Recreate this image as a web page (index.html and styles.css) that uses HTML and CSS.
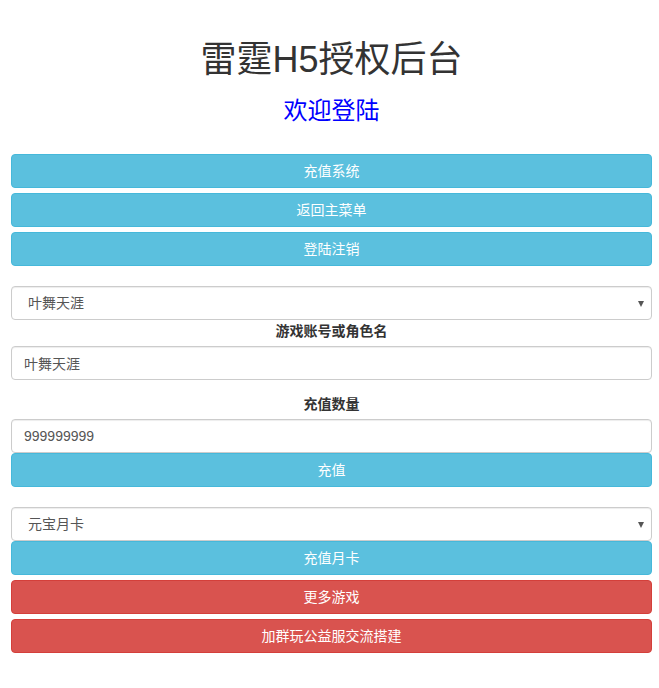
FILE: index.html
```html
<!DOCTYPE html>
<html lang="zh-CN">
<head>
    <meta charset="UTF-8">
    <meta name="viewport" content="width=device-width, initial-scale=1.0">
    <title>雷霆H5授权后台</title>
    <link rel="stylesheet" href="styles.css">
</head>
<body>
    <div class="container">
        <h1 class="title">雷霆H5授权后台</h1>
        <h3 class="welcome">欢迎登陆</h3>

        <div class="menu">
            <button class="btn info">充值系统</button>
            <button class="btn info">返回主菜单</button>
            <button class="btn info">登陆注销</button>
        </div>

        <div class="form-block">
            <div class="select-wrap">
                <select class="form-control">
                    <option>叶舞天涯</option>
                </select>
            </div>
            <label class="field-label">游戏账号或角色名</label>
            <input class="form-control" type="text" value="叶舞天涯">
            <label class="field-label spaced">充值数量</label>
            <input class="form-control" type="text" value="999999999">
            <button class="btn info">充值</button>
        </div>

        <div class="form-block">
            <div class="select-wrap">
                <select class="form-control">
                    <option>元宝月卡</option>
                </select>
            </div>
            <button class="btn info">充值月卡</button>
            <button class="btn danger gap">更多游戏</button>
            <button class="btn danger gap">加群玩公益服交流搭建</button>
        </div>
    </div>
</body>
</html>
```

FILE: styles.css
```css
* {
    margin: 0;
    padding: 0;
    box-sizing: border-box;
}
body {
    font-family: "Liberation Sans", Arial, "Noto Sans CJK SC", sans-serif;
    font-size: 14px;
    line-height: 1.42857;
    color: #333;
    background: #fff;
}
.container {
    padding: 40px 7px 30px 11px;
}
.title {
    text-align: center;
    font-size: 36px;
    font-weight: normal;
    line-height: 40px;
    color: #333;
}
.welcome {
    text-align: center;
    font-size: 24px;
    font-weight: normal;
    line-height: 26px;
    color: #0000ff;
    margin-top: 18px;
}
.menu {
    margin-top: 30px;
    display: flex;
    flex-direction: column;
    gap: 5px;
}
.btn {
    display: block;
    width: 100%;
    height: 34px;
    padding: 6px 12px;
    font-family: inherit;
    font-size: 14px;
    line-height: 20px;
    color: #fff;
    border: 1px solid transparent;
    border-radius: 4px;
    cursor: pointer;
    text-align: center;
}
.btn.info {
    background-color: #5bc0de;
    border-color: #46b8da;
}
.btn.danger {
    background-color: #d9534f;
    border-color: #d43f3a;
}
.btn.gap {
    margin-top: 5px;
}
.form-block {
    margin-top: 20px;
}
.form-control {
    display: block;
    width: 100%;
    height: 34px;
    padding: 6px 12px;
    font-family: inherit;
    font-size: 14px;
    line-height: 20px;
    color: #555;
    background: #fff;
    border: 1px solid #ccc;
    border-radius: 4px;
    box-shadow: inset 0 1px 1px rgba(0,0,0,0.075);
}
.select-wrap {
    position: relative;
}
.select-wrap select {
    appearance: none;
    -webkit-appearance: none;
    padding-left: 16px;
}
.select-wrap::after {
    content: "";
    position: absolute;
    right: 8px;
    top: 15px;
    border-left: 3.5px solid transparent;
    border-right: 3.5px solid transparent;
    border-top: 6px solid #555;
    pointer-events: none;
}
.field-label {
    display: block;
    text-align: center;
    font-weight: bold;
    line-height: 20px;
    margin: 1px 0 5px;
    color: #333;
}
.field-label.spaced {
    margin-top: 14px;
}
```
